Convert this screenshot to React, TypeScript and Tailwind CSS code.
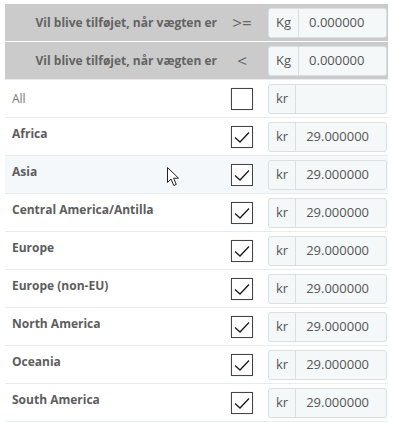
import React from "react";

const rows = [
  "Africa",
  "Asia",
  "Central America/Antilla",
  "Europe",
  "Europe (non-EU)",
  "North America",
  "Oceania",
  "South America",
];

function InputGroup({ unit, value }: { unit: string; value: string }) {
  return (
    <div className="ml-[6px] flex h-[30px] w-[119px] overflow-hidden rounded-[3px] border border-[#d8e0e4] bg-[#f4f8f9] text-[13px] text-[#555]">
      <div className="flex items-center border-r border-[#d8e0e4] px-[7px] text-[#555]">{unit}</div>
      <div className="flex items-center pl-[10px]">{value}</div>
    </div>
  );
}

function Checkbox({ checked }: { checked: boolean }) {
  return (
    <div className="rounded-[3px] bg-[#f3f5f7] p-[1px]">
      <div className="flex h-[22px] w-[22px] items-center justify-center border border-[#444] bg-white">
        {checked && (
          <svg width="20" height="20" viewBox="0 0 20 20">
            <path d="M3 10.5 L8 15 L17 5.5" fill="none" stroke="#1a1a1a" strokeWidth="1.3" />
          </svg>
        )}
      </div>
    </div>
  );
}

function HeaderRow({ symbol, last }: { symbol: string; last?: boolean }) {
  return (
    <div
      className={`flex h-[38px] items-center bg-[#cbcbcb] pl-[7px] pr-[1px] ${
        last ? "border-b border-[#e8ecee]" : "border-b border-white"
      }`}
    >
      <div className="flex-1 pr-[5px] text-right text-[12px] font-bold text-[#636363]">
        Vil blive tilføjet, når vægten er
      </div>
      <div className="flex w-[40px] justify-center text-[17px] text-[#666]">{symbol}</div>
      <InputGroup unit="Kg" value="0.000000" />
    </div>
  );
}

function Cursor() {
  return (
    <svg
      className="pointer-events-none absolute left-[166px] top-[166px]"
      width="16"
      height="22"
      viewBox="0 0 16 22"
    >
      <path
        d="M1.5 1.5 L1.5 16.5 L5 13 L7.8 19.5 L10.3 18.4 L7.6 12.2 L12.5 12.2 Z"
        fill="white"
        stroke="#222"
        strokeWidth="1"
        strokeLinejoin="round"
      />
    </svg>
  );
}

export default function App() {
  return (
    <div
      className="relative h-[422px] w-[393px] overflow-hidden bg-white pt-[4px]"
      style={{ fontFamily: '"Open Sans", "Noto Sans", sans-serif' }}
    >
      <div className="mx-[5px]">
        <HeaderRow symbol=">=" />
        <HeaderRow symbol="<" last />
        <div className="flex h-[38px] items-center border-b border-[#e8ecee] pl-[7px] pr-[1px]">
          <div className="flex-1 text-[12px] text-[#777]">All</div>
          <div className="flex w-[40px] justify-center">
            <Checkbox checked={false} />
          </div>
          <InputGroup unit="kr" value="" />
        </div>
        {rows.map((r, i) => (
          <div
            key={r}
            className={`flex h-[38px] items-center border-b border-[#e8ecee] pl-[7px] pr-[1px] ${
              i === 1 ? "bg-[#f5f8fa]" : "bg-white"
            }`}
          >
            <div className="-mt-[6px] flex-1 text-[12px] font-bold text-[#5d5d5d]">{r}</div>
            <div className="flex w-[40px] justify-center">
              <Checkbox checked />
            </div>
            <InputGroup unit="kr" value="29.000000" />
          </div>
        ))}
      </div>
      <Cursor />
    </div>
  );
}
